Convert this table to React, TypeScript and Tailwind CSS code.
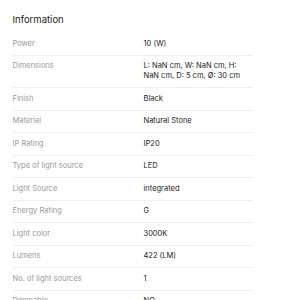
const rows: [string, string][] = [
  ['Power', '10 (W)'],
  ['Dimensions', 'L: NaN cm, W: NaN cm, H: NaN cm, D: 5 cm, Ø: 30 cm'],
  ['Finish', 'Black'],
  ['Material', 'Natural Stone'],
  ['IP Rating', 'IP20'],
  ['Type of light source', 'LED'],
  ['Light Source', 'integrated'],
  ['Energy Rating', 'G'],
  ['Light color', '3000K'],
  ['Lumens', '422 (LM)'],
  ['No. of light sources', '1'],
  ['Dimmable', 'NO'],
];

export default function App() {
  return (
    <div className="h-[300px] w-[300px] overflow-hidden bg-white pl-[12.5px] pt-[12px] font-['Inter',sans-serif]">
      <h2 className="text-[9.5px] leading-[15px] text-[#222]">Information</h2>
      <table className="mt-[6px] w-[240px] border-collapse">
        <tbody>
          {rows.map(([label, value]) => (
            <tr key={label} className="border-b border-[#eeeeee]">
              <td className="w-[131px] py-[5.75px] align-top text-[7.5px] leading-[10px] text-[#9a9a9a]">{label}</td>
              <td className="py-[5.75px] pr-[8px] align-top text-[7.5px] leading-[10px] text-[#222]">{value}</td>
            </tr>
          ))}
        </tbody>
      </table>
    </div>
  );
}
